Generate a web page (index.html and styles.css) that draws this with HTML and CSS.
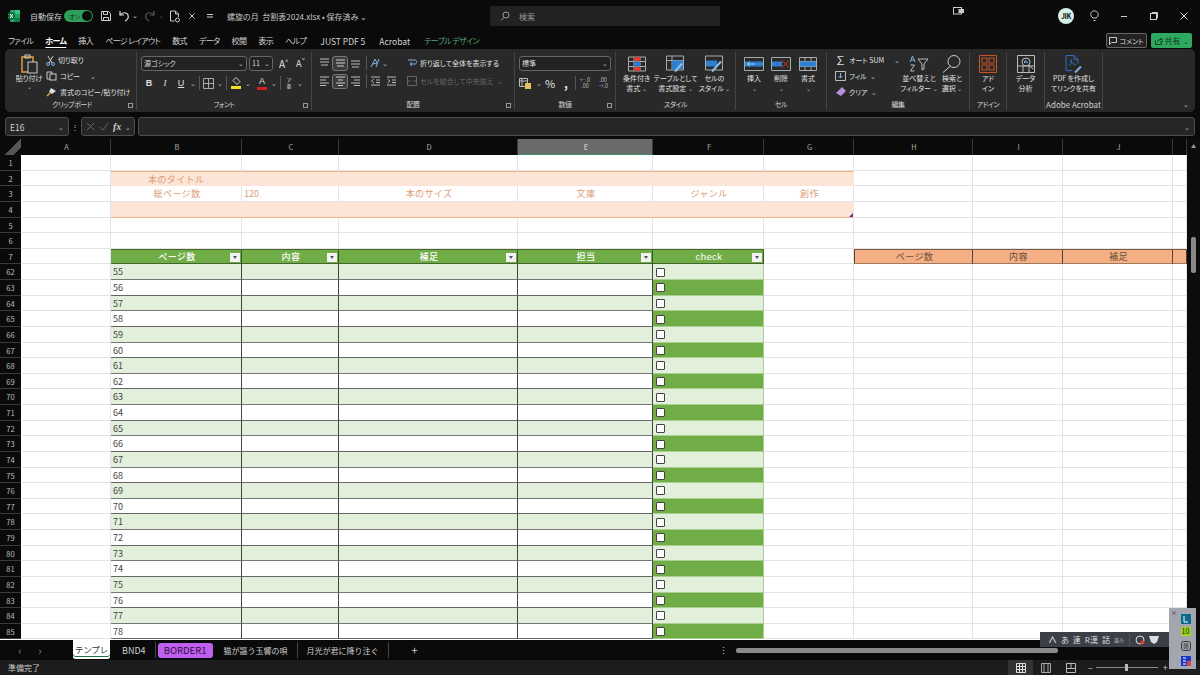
FILE: index.html
```html
<!DOCTYPE html>
<html lang="ja">

<head>
    <meta charset="UTF-8">
    <title>螺旋の月 台割表2024.xlsx</title>
    <link rel="stylesheet" href="styles.css">
</head>

<body>

    <!-- title bar -->
    <div class="titlebar">
        <div class="qat">
            <svg width="14" height="14" viewBox="0 0 14 14"><rect x="3" y="1" width="10" height="12" rx="1" fill="#21a366"/><rect x="8" y="1" width="5" height="4" fill="#33c481"/><rect x="8" y="9" width="5" height="4" fill="#107c41"/><rect x="1" y="3.5" width="7" height="7" rx="1" fill="#0e6b3a"/><path d="M3 5l3 4M6 5L3 9" stroke="#fff" stroke-width="1"/></svg>
            <span class="qat-label">自動保存</span>
            <span class="toggle"><span>オン</span><i></i></span>
            <svg class="gap7" width="12" height="12" viewBox="0 0 12 12" fill="none" stroke="#ccc"><path d="M1.5 1.5h7l2 2v7h-9z"/><path d="M3.5 1.5v3h4v-3M3.5 10.5v-3h5v3"/></svg>
            <svg class="gap5" width="14" height="12" viewBox="0 0 14 12" fill="none" stroke="#ddd" stroke-width="1.2"><path d="M3 1v4h4"/><path d="M3 5c2-3 7-3 8 0s-1 5-3 6"/></svg>
            <span class="chev">⌄</span>
            <svg class="gap5" width="14" height="12" viewBox="0 0 14 12" fill="none" stroke="#555" stroke-width="1.2"><path d="M11 1v4H7"/><path d="M11 5C9 2 4 2 3 5s1 5 3 6"/></svg>
            <span class="chev dim">⌄</span>
            <svg class="gap5" width="12" height="13" viewBox="0 0 12 13" fill="none" stroke="#ccc"><path d="M1.5 1h5l3 3v3M1.5 1v10h4M6.5 1v3h3"/><circle cx="8.5" cy="10" r="2"/></svg>
            <svg class="qat-x" width="6" height="6" viewBox="0 0 6 6" stroke="#ccc"><path d="M.5.5l5 5M5.5.5l-5 5"/></svg>
            <svg class="qat-more" width="6" height="5" viewBox="0 0 6 5" stroke="#ccc"><path d="M0 .5h6M0 3h6"/></svg>
        </div>
        <div class="doc-title">螺旋の月&nbsp; 台割表2024.xlsx • 保存済み ⌄</div>
        <div class="search">
            <svg width="10" height="10" viewBox="0 0 10 10" fill="none" stroke="#999"><circle cx="6" cy="4" r="3"/><path d="M4 6.5L1 9.5"/></svg>
            <span>検索</span>
        </div>
        <div class="win">
            <svg class="cam" width="11" height="8" viewBox="0 0 11 8" fill="none" stroke="#ccc"><rect x="0.5" y="0.5" width="8" height="6.5"/><rect x="6" y="2.5" width="4.5" height="3" fill="#ccc"/></svg>
            <span class="avatar">JIK</span>
            <svg class="bulb" width="9" height="12" viewBox="0 0 9 12" fill="none" stroke="#ccc"><path d="M3 8C1 6.5.5 5 .8 3.5 2 0 7 0 8.2 3.5 8.5 5 8 6.5 6 8z"/><path d="M3.5 10.5h2"/></svg>
            <svg class="win-btn" width="8" height="8" viewBox="0 0 8 8" stroke="#ccc"><path d="M1 4.5h6"/></svg>
            <svg class="win-btn" width="8" height="8" viewBox="0 0 8 8" fill="none" stroke="#ccc"><rect x=".5" y="1.5" width="6" height="6"/><path d="M2 1.5V.5h5.5V6h-1"/></svg>
            <svg class="win-btn" width="8" height="8" viewBox="0 0 8 8" stroke="#ddd"><path d="M.5.5l7 7M7.5.5l-7 7"/></svg>
        </div>
    </div>

    <!-- menu tabs -->
    <div class="menubar">
        <span>ファイル</span>
        <span class="on">ホーム</span>
        <span>挿入</span>
        <span>ページ レイアウト</span>
        <span>数式</span>
        <span>データ</span>
        <span>校閲</span>
        <span>表示</span>
        <span>ヘルプ</span>
        <span class="en">JUST PDF 5</span>
        <span class="en">Acrobat</span>
        <span class="green">テーブル デザイン</span>
        <div class="menu-right">
            <div class="btn-comment">
                <svg width="8" height="8" viewBox="0 0 8 8" fill="none" stroke="#ccc"><path d="M.5.5h7v5h-5L.5 7.5z"/></svg>
                コメント
            </div>
            <div class="btn-share">
                <svg width="8" height="8" viewBox="0 0 8 8" fill="none" stroke="#0b3d20"><path d="M.5 3.5v4h6v-2M2.5 5C3 3 4.5 2.5 6 2.5V1l2 2.5L6 5.5V4"/></svg>
                共有 <small>⌄</small>
            </div>
        </div>
    </div>

    <!-- ribbon -->
    <div class="ribbon">
        <div class="grp g-clip">
            <div class="grp-body clip">
                <div class="tool-lg paste">
                    <svg width="18" height="20" viewBox="0 0 18 20" fill="none"><path d="M2 3h11v15H2z" stroke="#e8a33d" stroke-width="1.4"/><rect x="5" y="1" width="5" height="3" stroke="#ccc"/><rect x="8" y="8" width="9" height="11" fill="#292929" stroke="#ccc"/></svg>
                    <span>貼り付け</span>
                    <small>⌄</small>
                </div>
                <div class="tool-col">
                    <div class="tool"><svg width="9" height="11" viewBox="0 0 9 11" fill="none" stroke="#ccc"><path d="M2 1l4 7M7 1L3 8"/><circle cx="2" cy="9" r="1.5" stroke="#7fb2e5"/><circle cx="7" cy="9" r="1.5" stroke="#7fb2e5"/></svg>切り取り</div>
                    <div class="tool"><svg width="11" height="10" viewBox="0 0 11 10" fill="none" stroke="#ccc"><path d="M1 1h5v7H1z"/><rect x="4" y="3" width="6" height="6" fill="#292929"/></svg>コピー <small class="sp">⌄</small></div>
                    <div class="tool"><svg width="11" height="10" viewBox="0 0 11 10" fill="none"><path d="M5 1l5 3-4 3-3-2z" fill="#ddd"/><path d="M4 6L1 9" stroke="#e8a33d" stroke-width="1.5"/></svg>書式のコピー/貼り付け</div>
                </div>
            </div>
            <div class="grp-label">クリップボード<i class="launch"></i></div>
        </div>

        <div class="grp g-font">
            <div class="grp-body stack">
                <div class="line">
                    <span class="select sel-font">源ゴシック<small>⌄</small></span>
                    <span class="select sel-size">11<small>⌄</small></span>
                    <span class="big-a">A<sup>^</sup></span>
                    <span class="big-a small-a">A<sup>ˇ</sup></span>
                </div>
                <div class="line icons">
                    <span class="ic b">B</span><span class="ic it">I</span><span class="ic u">U</span><small>⌄</small>
                    <i class="sep"></i>
                    <svg width="11" height="11" viewBox="0 0 11 11" fill="none" stroke="#aaa"><path d="M.5.5h10v10H.5zM5.5.5v10M.5 5.5h10"/></svg><small>⌄</small>
                    <i class="sep"></i>
                    <span class="swatch"><svg width="10" height="8" viewBox="0 0 10 8" fill="none" stroke="#ccc"><path d="M5 .5l4 4-3 3-4-4z"/></svg><b class="yellow"></b></span><small>⌄</small>
                    <span class="swatch second"><em>A</em><b class="red"></b></span><small>⌄</small>
                    <i class="sep"></i>
                    <span class="ruby">ア<br>亜</span><small>⌄</small>
                </div>
            </div>
            <div class="grp-label">フォント<i class="launch"></i></div>
        </div>

        <div class="grp g-align">
            <div class="grp-body stack">
                <div class="line al">
                    <svg class="al-ic" width="11" height="10" viewBox="0 0 11 10" stroke="#bbb"><path d="M1 1h9M1 4h9M2 7h7"/></svg>
                    <span class="boxed"><svg width="11" height="10" viewBox="0 0 11 10" stroke="#ccc"><path d="M1 2h9M1 5h9M2 8h7"/></svg></span>
                    <svg class="al-ic" width="11" height="10" viewBox="0 0 11 10" stroke="#bbb"><path d="M1 3h9M1 6h9M2 9h7"/></svg>
                    <i class="sep"></i>
                    <svg width="10" height="10" viewBox="0 0 10 10" fill="none" stroke="#7fb2e5"><path d="M1 9l4-8 2 4-4 1M9 1L6 9"/></svg><small class="orient-chev">⌄</small>
                    <span class="wrap"><svg width="10" height="10" viewBox="0 0 10 10" fill="none" stroke="#7fb2e5"><path d="M1 2h7c2 0 2 4 0 4H4M5 4L3 6l2 2"/></svg>折り返して全体を表示する</span>
                </div>
                <div class="line al">
                    <svg class="al-ic" width="11" height="10" viewBox="0 0 11 10" stroke="#bbb"><path d="M1 1h9M1 4h6M1 7h9M1 9.5h6"/></svg>
                    <span class="boxed"><svg width="11" height="10" viewBox="0 0 11 10" stroke="#ccc"><path d="M1 1h9M3 4h5M1 7h9M3 9.5h5"/></svg></span>
                    <svg class="al-ic" width="11" height="10" viewBox="0 0 11 10" stroke="#bbb"><path d="M1 1h9M4 4h6M1 7h9M4 9.5h6"/></svg>
                    <i class="sep"></i>
                    <svg class="indent" width="11" height="10" viewBox="0 0 11 10" fill="none" stroke="#bbb"><path d="M1 1h9M6 4h4M6 6.5h4M1 9h9"/><path d="M4 3L1.5 5 4 7" stroke="#7fb2e5"/></svg>
                    <svg class="indent" width="11" height="10" viewBox="0 0 11 10" fill="none" stroke="#bbb"><path d="M1 1h9M6 4h4M6 6.5h4M1 9h9"/><path d="M1.5 3L4 5 1.5 7" stroke="#7fb2e5"/></svg>
                    <span class="wrap off"><svg width="10" height="10" viewBox="0 0 10 10" fill="none" stroke="#666"><path d="M.5.5h9v9h-9zM.5 5h3M6.5 5h3"/></svg>セルを結合して中央揃え <small>⌄</small></span>
                </div>
            </div>
            <div class="grp-label">配置<i class="launch"></i></div>
        </div>

        <div class="grp g-num">
            <div class="grp-body stack">
                <div class="line"><span class="select sel-num">標準<small>⌄</small></span></div>
                <div class="line icons">
                    <svg class="acc" width="12" height="11" viewBox="0 0 12 11" fill="none" stroke="#bbb"><path d="M.5.5h8v8h-8zM.5 3h8M3 .5v8"/><rect x="6" y="5" width="6" height="6" fill="#e6c063" stroke="none"/></svg><small>⌄</small>
                    <span class="pct">%</span>
                    <span class="comma">,</span>
                    <i class="sep"></i>
                    <span class="dec"><b>←</b>.0<br>.00</span>
                    <span class="dec second">.00<br><b>→</b>.0</span>
                </div>
            </div>
            <div class="grp-label">数値<i class="launch"></i></div>
        </div>

        <div class="grp g-style">
            <div class="grp-body lg-row">
                <div class="tool-lg w39">
                    <svg width="18" height="15" viewBox="0 0 18 15" fill="none" stroke="#aaa"><path d="M.5.5h17v14H.5zM6 .5v14M12 .5v14M.5 5h17M.5 10h17"/><path d="M6 .5h6V5H6zM6 10h6v4.5H6z" fill="#e03c31" stroke="none"/><path d="M6 5h6v5H6z" fill="#2f7fd1" stroke="none"/></svg>
                    <span>条件付き<br>書式 <small>⌄</small></span>
                </div>
                <div class="tool-lg w39">
                    <svg width="19" height="17" viewBox="0 0 19 17" fill="none" stroke="#aaa"><path d="M.5.5h17v14H.5zM.5 5h17M6 .5v14"/><path d="M6 5h11v9H6z" fill="#2f7fd1" stroke="none"/><path d="M9 16L16 8" stroke="#8fc1ee" stroke-width="2"/></svg>
                    <span>テーブルとして<br>書式設定 <small>⌄</small></span>
                </div>
                <div class="tool-lg w39">
                    <svg width="19" height="17" viewBox="0 0 19 17" fill="none" stroke="#aaa"><path d="M.5.5h17v14H.5z"/><path d="M1 5h11v6H1z" fill="#2f7fd1" stroke="none"/><path d="M7 16L16 6" stroke="#8fc1ee" stroke-width="2"/></svg>
                    <span>セルの<br>スタイル <small>⌄</small></span>
                </div>
            </div>
            <div class="grp-label">スタイル</div>
        </div>

        <div class="grp g-cell">
            <div class="grp-body lg-row">
                <div class="tool-lg w27">
                    <svg width="20" height="15" viewBox="0 0 20 15" fill="none" stroke="#aaa"><path d="M.5 1h19v13H.5z"/><path d="M1 5h18v5H1z" fill="#2f7fd1" stroke="none"/><path d="M11 7.5H3M6 5L3 7.5 6 10" stroke="#9cd"/></svg>
                    <span>挿入<br><small>⌄</small></span>
                </div>
                <div class="tool-lg w27">
                    <svg width="20" height="15" viewBox="0 0 20 15" fill="none" stroke="#aaa"><path d="M.5 1h19v13H.5z"/><path d="M1 5h10v5H1z" fill="#2f7fd1" stroke="none"/><path d="M11 4l7 7M18 4l-7 7" stroke="#e03c31"/></svg>
                    <span>削除<br><small>⌄</small></span>
                </div>
                <div class="tool-lg w27">
                    <svg width="18" height="15" viewBox="0 0 18 15" fill="none" stroke="#aaa"><path d="M.5 1h17v13H.5zM.5 5h17M.5 10h17M6 1v13M12 1v13"/><path d="M1 5h16v5H1z" fill="#2f7fd1" stroke="none"/></svg>
                    <span>書式<br><small>⌄</small></span>
                </div>
            </div>
            <div class="grp-label">セル</div>
        </div>

        <div class="grp g-edit">
            <div class="grp-body edit">
                <div class="tool-col">
                    <div class="tool"><span class="sigma">∑</span>オート SUM <small class="sp">⌄</small></div>
                    <div class="tool"><svg width="11" height="10" viewBox="0 0 11 10" fill="none" stroke="#bbb"><path d="M.5.5h10v9H.5z"/><path d="M5.5 2v5M3.5 5l2 2 2-2" stroke="#7fb2e5"/></svg>フィル <small>⌄</small></div>
                    <div class="tool"><svg width="11" height="10" viewBox="0 0 11 10"><path d="M7 0l4 4-5 5-5-3z" fill="#b98de0"/></svg>クリア <small>⌄</small></div>
                </div>
                <div class="tool-lg w37">
                    <svg width="20" height="18" viewBox="0 0 20 18" fill="none" stroke="#bbb"><path d="M9 4l4 5v6l2-1V9l4-5z"/><path d="M1 7l2.5-6L6 7M2 5h3" stroke="#7fb2e5"/><path d="M1.5 10h4l-4 6h4"/></svg>
                    <span>並べ替えと<br>フィルター <small>⌄</small></span>
                </div>
                <div class="tool-lg w29">
                    <svg width="20" height="19" viewBox="0 0 20 19" fill="none" stroke="#ccc"><circle cx="12" cy="7" r="6"/><path d="M8 12L1 18"/></svg>
                    <span>検索と<br>選択 <small>⌄</small></span>
                </div>
            </div>
            <div class="grp-label">編集</div>
        </div>

        <div class="grp g-addin">
            <div class="grp-body lg-row">
                <div class="tool-lg w35">
                    <svg width="18" height="18" viewBox="0 0 18 18" fill="none" stroke="#c8502a"><path d="M.5.5h17v17H.5z"/><rect x="3" y="3" width="5" height="5"/><rect x="10" y="3" width="5" height="5"/><rect x="3" y="10" width="5" height="5"/><rect x="10" y="10" width="5" height="5"/></svg>
                    <span>アド<br>イン</span>
                </div>
            </div>
            <div class="grp-label">アドイン</div>
        </div>

        <div class="grp g-data">
            <div class="grp-body lg-row">
                <div class="tool-lg w35">
                    <svg width="18" height="18" viewBox="0 0 18 18" fill="none" stroke="#bbb"><path d="M.5.5h17v17H.5zM.5 11h17M6 11v6M12 11v6"/><circle cx="9" cy="7" r="4"/><path d="M7.5 8V6M9 8V5M10.5 8V7" stroke="#7fb2e5"/><path d="M12 10l4 4"/></svg>
                    <span>データ<br>分析</span>
                </div>
            </div>
        </div>

        <div class="grp g-pdf">
            <div class="grp-body lg-row">
                <div class="tool-lg w56">
                    <svg width="18" height="19" viewBox="0 0 18 19" fill="none" stroke="#2d6fc0"><path d="M1 1h8l4 4v4M1 1v15h6M9 1v4h4"/><path d="M4 11c2-1 3-4 2-6 0 3 2 5 5 5"/><path d="M10 18l6-6" stroke="#7fb2e5" stroke-width="2"/></svg>
                    <span>PDF を作成し<br>てリンクを共有</span>
                </div>
            </div>
            <div class="grp-label acrobat">Adobe Acrobat</div>
        </div>

        <div class="ribbon-end"><small>⌄</small></div>
    </div>

    <!-- formula bar -->
    <div class="fbar">
        <span class="namebox">E16<small>⌄</small></span>
        <span class="fdots">⋮</span>
        <span class="fbtns">
            <svg width="9" height="9" viewBox="0 0 9 9" stroke="#666"><path d="M1 1l7 7M8 1L1 8"/></svg>
            <svg width="10" height="9" viewBox="0 0 10 9" fill="none" stroke="#666"><path d="M1 5l3 3 5-7"/></svg>
            <em>fx</em><small>⌄</small>
        </span>
        <span class="finput"><small>⌄</small></span>
    </div>

    <!-- sheet -->
    <div class="sheet">
        <div class="grid">
            <div class="row colhead">
                <span class="corner"></span><span>A</span><span>B</span><span>C</span><span>D</span><span class="sel">E</span><span>F</span><span>G</span><span>H</span><span>I</span><span>J</span><span></span>
            </div>
            <div class="row"><span>1</span><span></span><span></span><span></span><span></span><span></span><span></span><span></span><span></span><span></span><span></span><span></span></div>
            <div class="row peach top"><span>2</span><span></span><span class="book-title">本のタイトル</span><span></span><span></span><span></span><span></span><span></span><span></span><span></span><span></span><span></span></div>
            <div class="row info"><span>3</span><span></span><span class="mid">総ページ数</span><span>120</span><span class="mid">本のサイズ</span><span class="mid">文庫</span><span class="mid">ジャンル</span><span class="mid">創作</span><span></span><span></span><span></span><span></span></div>
            <div class="row peach bottom"><span>4</span><span></span><span></span><span></span><span></span><span></span><span></span><span class="fill-mark"></span><span></span><span></span><span></span><span></span></div>
            <div class="row"><span>5</span><span></span><span></span><span></span><span></span><span></span><span></span><span></span><span></span><span></span><span></span><span></span></div>
            <div class="row"><span>6</span><span></span><span></span><span></span><span></span><span></span><span></span><span></span><span></span><span></span><span></span><span></span></div>
            <div class="row thead"><span>7</span><span></span><span>ページ数<i></i></span><span>内容<i></i></span><span>補足<i></i></span><span>担当<i></i></span><span class="chk">check<i></i></span><span></span><span>ページ数</span><span>内容</span><span>補足</span><span></span></div>
            <div class="row band"><span>62</span><span></span><span>55</span><span></span><span></span><span></span><span><em></em></span><span></span><span></span><span></span><span></span><span></span></div>
            <div class="row plain"><span>63</span><span></span><span>56</span><span></span><span></span><span></span><span><em></em></span><span></span><span></span><span></span><span></span><span></span></div>
            <div class="row band"><span>64</span><span></span><span>57</span><span></span><span></span><span></span><span><em></em></span><span></span><span></span><span></span><span></span><span></span></div>
            <div class="row plain"><span>65</span><span></span><span>58</span><span></span><span></span><span></span><span><em></em></span><span></span><span></span><span></span><span></span><span></span></div>
            <div class="row band"><span>66</span><span></span><span>59</span><span></span><span></span><span></span><span><em></em></span><span></span><span></span><span></span><span></span><span></span></div>
            <div class="row plain"><span>67</span><span></span><span>60</span><span></span><span></span><span></span><span><em></em></span><span></span><span></span><span></span><span></span><span></span></div>
            <div class="row band"><span>68</span><span></span><span>61</span><span></span><span></span><span></span><span><em></em></span><span></span><span></span><span></span><span></span><span></span></div>
            <div class="row plain"><span>69</span><span></span><span>62</span><span></span><span></span><span></span><span><em></em></span><span></span><span></span><span></span><span></span><span></span></div>
            <div class="row band"><span>70</span><span></span><span>63</span><span></span><span></span><span></span><span><em></em></span><span></span><span></span><span></span><span></span><span></span></div>
            <div class="row plain"><span>71</span><span></span><span>64</span><span></span><span></span><span></span><span><em></em></span><span></span><span></span><span></span><span></span><span></span></div>
            <div class="row band"><span>72</span><span></span><span>65</span><span></span><span></span><span></span><span><em></em></span><span></span><span></span><span></span><span></span><span></span></div>
            <div class="row plain"><span>73</span><span></span><span>66</span><span></span><span></span><span></span><span><em></em></span><span></span><span></span><span></span><span></span><span></span></div>
            <div class="row band"><span>74</span><span></span><span>67</span><span></span><span></span><span></span><span><em></em></span><span></span><span></span><span></span><span></span><span></span></div>
            <div class="row plain"><span>75</span><span></span><span>68</span><span></span><span></span><span></span><span><em></em></span><span></span><span></span><span></span><span></span><span></span></div>
            <div class="row band"><span>76</span><span></span><span>69</span><span></span><span></span><span></span><span><em></em></span><span></span><span></span><span></span><span></span><span></span></div>
            <div class="row plain"><span>77</span><span></span><span>70</span><span></span><span></span><span></span><span><em></em></span><span></span><span></span><span></span><span></span><span></span></div>
            <div class="row band"><span>78</span><span></span><span>71</span><span></span><span></span><span></span><span><em></em></span><span></span><span></span><span></span><span></span><span></span></div>
            <div class="row plain"><span>79</span><span></span><span>72</span><span></span><span></span><span></span><span><em></em></span><span></span><span></span><span></span><span></span><span></span></div>
            <div class="row band"><span>80</span><span></span><span>73</span><span></span><span></span><span></span><span><em></em></span><span></span><span></span><span></span><span></span><span></span></div>
            <div class="row plain"><span>81</span><span></span><span>74</span><span></span><span></span><span></span><span><em></em></span><span></span><span></span><span></span><span></span><span></span></div>
            <div class="row band"><span>82</span><span></span><span>75</span><span></span><span></span><span></span><span><em></em></span><span></span><span></span><span></span><span></span><span></span></div>
            <div class="row plain"><span>83</span><span></span><span>76</span><span></span><span></span><span></span><span><em></em></span><span></span><span></span><span></span><span></span><span></span></div>
            <div class="row band"><span>84</span><span></span><span>77</span><span></span><span></span><span></span><span><em></em></span><span></span><span></span><span></span><span></span><span></span></div>
            <div class="row plain"><span>85</span><span></span><span>78</span><span></span><span></span><span></span><span><em></em></span><span></span><span></span><span></span><span></span><span></span></div>
        </div>
        <div class="vscroll"><small>▲</small><i></i></div>
    </div>

    <!-- sheet tabs -->
    <div class="tabs">
        <span class="tab-nav">‹</span>
        <span class="tab-nav">›</span>
        <span class="tab active">テンプレ</span>
        <span class="tab first">BND4</span>
        <span class="tab purple">BORDER1</span>
        <span class="tab">猫が謳う玉響の唄</span>
        <span class="tab">月光が君に降り注ぐ</span>
        <span class="tab-add">+</span>
        <span class="tab-dots">⋮</span>
        <div class="hscroll"><i></i></div>
    </div>

    <!-- status bar -->
    <div class="status">
        <span>準備完了</span>
        <div class="views">
            <span class="view on"><svg width="10" height="10" viewBox="0 0 10 10" fill="none" stroke="#ddd"><path d="M.5.5h9v9h-9zM3.5.5v9M6.5.5v9M.5 3.5h9M.5 6.5h9"/></svg></span>
            <span class="view"><svg width="10" height="10" viewBox="0 0 10 10" fill="none" stroke="#aaa"><path d="M.5.5h9v9h-9zM3 .5v9M7 .5v9"/></svg></span>
            <span class="view"><svg width="10" height="10" viewBox="0 0 10 10" fill="none" stroke="#bbb"><path d="M.5.5h9v9h-9zM5 .5v5M.5 5.5h9"/></svg></span>
        </div>
        <div class="zoom">–<span class="zoom-track"><i></i></span>+</div>
    </div>

    <!-- floating IME bar, lies over the sheet -->
    <div class="ime">
        <span class="ime-a">∧</span><span>あ</span><span>連</span><span>R漢</span><span>話</span><small>英小</small>
        <i class="sep"></i>
        <svg width="10" height="10" viewBox="0 0 10 10" fill="none" stroke="#ddd"><circle cx="5" cy="5" r="4"/><circle cx="7.5" cy="7.5" r="2" fill="#e03c31" stroke="none"/></svg>
        <svg width="10" height="8" viewBox="0 0 10 8" fill="#ddd"><path d="M0 0h10L8 6 5 8 2 6z"/></svg>
    </div>
    <div class="ime-side">
        <b class="side-x">×</b>
        <svg width="10" height="10" viewBox="0 0 10 10"><rect width="10" height="10" fill="#0b6b8a"/><path d="M3 2v6h4" stroke="#fff" fill="none"/></svg>
        <span class="side-num">10</span>
        <span class="side-menu"><svg width="10" height="10" viewBox="0 0 10 10" fill="none" stroke="#333"><rect x=".5" y=".5" width="9" height="9" rx="2"/><path d="M2.5 3h5M2.5 5h5M2.5 7h5"/></svg></span>
        <svg width="10" height="10" viewBox="0 0 10 10"><rect width="10" height="10" fill="#1a35c8"/><path d="M2 2h3M2 5h3M2 8h3" stroke="#fff"/><rect x="6" y="5" width="4" height="5" fill="#d44"/></svg>
    </div>

</body>

</html>
```

FILE: styles.css
```css
* {
    box-sizing: border-box;
}

body {
    margin: 0;
    width: 1200px;
    height: 675px;
    overflow: hidden;
    position: relative;
    display: flex;
    flex-direction: column;
    background-color: #0a0a0a;
    color: #d0d0d0;
    font-family: "Noto Sans CJK JP", "Noto Sans", sans-serif;
    font-size: 8px;
    font-feature-settings: "palt";
}

small {
    font-size: 7px;
    color: #bbb;
}

svg {
    flex-shrink: 0;
    display: block;
}

/* title bar */
.titlebar {
    height: 32px;
    display: flex;
    align-items: center;
    position: relative;
}

.qat {
    display: flex;
    align-items: center;
    width: 227px;
    flex-shrink: 0;
    padding-left: 7px;
}

.qat-label {
    margin-left: 9px;
    width: 34px;
    white-space: nowrap;
    font-size: 8px;
}

.toggle {
    width: 29px;
    height: 12px;
    border-radius: 6px;
    background-color: #2f9e5b;
    display: flex;
    align-items: center;
    justify-content: space-between;
    padding: 0 1px 0 5px;
    font-size: 6px;
    color: #0c2c18;
    white-space: nowrap;
}

.toggle i {
    width: 10px;
    height: 10px;
    border-radius: 50%;
    background-color: #0a0a0a;
}

.gap5 {
    margin-left: 5px;
}

.gap7 {
    margin-left: 7px;
}

.chev {
    width: 6px;
    margin-left: 1px;
    margin-bottom: 2px;
    font-size: 7px;
}

.dim {
    color: #555;
}

.qat-x {
    margin-left: 8px;
}

.qat-more {
    margin-left: 12px;
}

.doc-title {
    width: 263px;
    flex-shrink: 0;
    font-size: 8px;
    color: #c8c8c8;
}

.search {
    width: 230px;
    height: 20px;
    flex-shrink: 0;
    background-color: #222;
    display: flex;
    align-items: center;
    gap: 9px;
    padding-left: 10px;
    color: #999;
    font-size: 8px;
}

.win {
    flex: 1;
    display: flex;
    align-items: center;
}

.cam {
    margin: -11px 0 0 233px;
}

.avatar {
    width: 16px;
    height: 16px;
    border-radius: 50%;
    background-color: #d5efe9;
    color: #111;
    font-size: 7px;
    font-weight: 700;
    letter-spacing: -0.3px;
    display: flex;
    align-items: center;
    justify-content: center;
    margin-left: 94px;
}

.bulb {
    margin-left: 16px;
}

.bulb + .win-btn {
    margin-left: 21px;
}

.win-btn {
    margin-left: 22px;
}

/* menu tabs */
.menubar {
    height: 17px;
    display: flex;
    align-items: center;
    gap: 12px;
    padding-left: 8px;
    font-size: 8px;
    letter-spacing: -0.6px;
    color: #d4d4d4;
    white-space: nowrap;
}

.menubar .on {
    font-weight: 700;
    color: #fff;
    text-decoration: underline;
    text-underline-offset: 3px;
}

.menubar .en {
    font-size: 8.5px;
    letter-spacing: 0;
    margin-left: 2px;
}

.menubar .green {
    color: #55a87a;
    margin-left: 2px;
}

.menu-right {
    margin-left: auto;
    margin-right: 8px;
    display: flex;
    gap: 4px;
    letter-spacing: 0;
}

.btn-comment,
.btn-share {
    height: 15px;
    width: 41px;
    border-radius: 2px;
    display: flex;
    align-items: center;
    justify-content: center;
    gap: 2px;
    font-size: 7px;
}

.btn-comment {
    border: 1px solid #666;
    background-color: #222;
}

.btn-share {
    background-color: #2fa860;
    color: #0b3d20;
    font-size: 8px;
}

.btn-share small {
    color: #0b3d20;
}

/* ribbon */
.ribbon {
    height: 63px;
    margin: 0 5px;
    padding: 3px 0 0 3px;
    background-color: #292929;
    border-radius: 5px;
    display: flex;
    color: #e0e0e0;
}

.grp {
    height: 58px;
    border-right: 1px solid #444;
    display: flex;
    flex-direction: column;
    flex-shrink: 0;
    position: relative;
}

.g-clip { width: 129px; }
.g-font { width: 175px; }
.g-align { width: 203px; }
.g-num { width: 101px; }
.g-style { width: 120px; }
.g-cell { width: 91px; }
.g-edit { width: 143px; }
.g-addin { width: 37px; }
.g-data { width: 38px; }
.g-pdf { width: 58px; }

.w27 { width: 27px; }
.w29 { width: 29px; }
.w35 { width: 35px; }
.w37 { width: 37px; }
.w39 { width: 39px; }
.w56 { width: 56px; }

.grp-body {
    height: 47px;
    display: flex;
    flex-shrink: 0;
}

.grp-label {
    height: 11px;
    text-align: center;
    font-size: 7px;
    letter-spacing: -0.5px;
    line-height: 11px;
    color: #d0d0d0;
}

.grp-label.acrobat {
    font-size: 8px;
    letter-spacing: 0;
    white-space: nowrap;
}

.launch {
    position: absolute;
    right: 3px;
    bottom: 2px;
    width: 5px;
    height: 5px;
    border: 1px solid #999;
}

.ribbon-end {
    flex: 1;
    display: flex;
    justify-content: flex-end;
    align-items: flex-end;
    padding: 0 6px 3px 0;
}

.tool-lg {
    display: flex;
    flex-direction: column;
    align-items: center;
    flex-shrink: 0;
    text-align: center;
    font-size: 7px;
    line-height: 9.5px;
    white-space: nowrap;
    color: #e0e0e0;
}

.tool-lg svg {
    height: 20px;
}

.tool-lg small {
    font-size: 6px;
    line-height: 6px;
}

.paste {
    width: 32px;
    margin-left: 5px;
    padding-top: 2px;
}

.clip {
    gap: 1px;
}

.tool-col {
    display: flex;
    flex-direction: column;
    justify-content: space-between;
    padding: 2px 0 1px;
}

.tool {
    display: flex;
    align-items: center;
    gap: 3px;
    white-space: nowrap;
    font-size: 7px;
    line-height: 12px;
}

.tool small.sp {
    margin-left: 7px;
}

.stack {
    flex-direction: column;
    gap: 2px;
    padding: 3px 0 0 4px;
}

.line {
    display: flex;
    align-items: center;
    height: 16px;
    gap: 2px;
}

.select {
    height: 15px;
    border: 1px solid #666;
    border-radius: 3px;
    display: flex;
    align-items: center;
    justify-content: space-between;
    padding: 0 2px;
    font-size: 7px;
    color: #ddd;
    background-color: #222;
}

.sel-font { width: 106px; }
.sel-size { width: 24px; }
.sel-num { width: 92px; }

.big-a {
    font-size: 10px;
    margin-left: 4px;
    width: 13px;
}

.big-a sup {
    font-size: 6px;
    line-height: 0;
}

.small-a {
    font-size: 9px;
    margin-left: 2px;
}

.icons {
    margin-top: 2px;
    gap: 0;
}

.icons small {
    width: 7px;
    text-align: center;
    margin-left: 2px;
}

.ic {
    width: 16px;
    text-align: center;
    font-size: 9px;
    font-family: "Liberation Sans", sans-serif;
}

.ic + small {
    margin-left: 0;
}

.ic.b {
    font-weight: 700;
}

.ic.it {
    font-style: italic;
    font-family: "Liberation Serif", serif;
}

.ic.u {
    text-decoration: underline;
}

.sep {
    width: 1px;
    height: 14px;
    background-color: #555;
    margin: 0 3px;
    flex-shrink: 0;
}

.swatch {
    width: 12px;
    display: flex;
    flex-direction: column;
    align-items: center;
    font-size: 9px;
    line-height: 9px;
}

.swatch.second {
    margin-left: 5px;
}

.swatch em {
    font-style: normal;
    font-family: "Liberation Sans", sans-serif;
}

.swatch b {
    width: 10px;
    height: 3px;
    display: block;
    margin-top: 1px;
}

.yellow {
    background-color: #f2e01a;
}

.red {
    background-color: #d81e1e;
}

.ruby {
    width: 10px;
    font-size: 5px;
    line-height: 6px;
    text-align: center;
}

.al {
    gap: 0;
    padding-left: 1px;
}

.al-ic {
    margin: 0 2px;
}

.boxed {
    width: 16px;
    height: 15px;
    border: 1px solid #777;
    border-radius: 3px;
    background-color: #3c3c3c;
    display: flex;
    align-items: center;
    justify-content: center;
}

.orient-chev {
    margin-left: 2px;
}

.indent {
    margin-right: 5px;
}

.wrap {
    display: flex;
    align-items: center;
    white-space: nowrap;
    font-size: 7px;
    margin-left: 19px;
}

.wrap svg {
    margin-right: 3px;
}

.wrap.off {
    color: #666;
    margin-left: 5px;
}

.wrap.off small {
    color: #666;
    margin-left: 4px;
}

.acc {
    margin-right: 2px;
}

.pct {
    font-size: 11px;
    width: 16px;
    text-align: center;
}

.comma {
    width: 16px;
    font-size: 12px;
    font-weight: 700;
    text-align: center;
    line-height: 10px;
}

.comma + .sep {
    margin: 0 1px;
}

.dec {
    font-size: 5.5px;
    line-height: 6px;
    width: 16px;
    color: #bbb;
    text-align: center;
}

.dec b {
    color: #7fb2e5;
    font-weight: 400;
}

.dec.second {
    margin-left: 2px;
}

.lg-row {
    justify-content: center;
    padding-top: 2px;
}

.edit {
    padding: 0 0 0 8px;
}

.edit .tool-col {
    width: 65.5px;
}

.edit .tool-lg {
    padding-top: 2px;
}

.sigma {
    width: 11px;
    font-size: 11px;
    line-height: 11px;
    text-align: center;
}

/* formula bar */
.fbar {
    height: 19px;
    margin: 5px 5px 3px;
    display: flex;
    align-items: center;
    flex-shrink: 0;
}

.namebox,
.fbtns,
.finput {
    height: 19px;
    background-color: #262626;
    border: 1px solid #4e4e4e;
    border-radius: 3px;
    display: flex;
    align-items: center;
}

.namebox {
    width: 64px;
    justify-content: space-between;
    padding: 0 4px;
    font-size: 8.5px;
}

.fdots {
    width: 12px;
    text-align: center;
    font-size: 8px;
}

.fbtns {
    width: 54px;
    gap: 4px;
    padding-left: 4px;
}

.fbtns em {
    font-family: "Liberation Serif", serif;
    font-weight: 700;
    font-size: 10px;
    color: #ccc;
}

.finput {
    flex: 1;
    margin-left: 3px;
    justify-content: flex-end;
    padding-right: 4px;
}

/* sheet */
.sheet {
    height: 501px;
    display: flex;
    flex-shrink: 0;
}

.grid {
    width: 1187px;
    background-color: #fff;
}

.row {
    display: grid;
    grid-template-columns: 21px 90px 131px 97px 179px 135px 111px 90px 119px 90px 110px 14px;
    height: 15.64px;
    font-size: 9px;
    line-height: 16px;
    color: #444;
    font-feature-settings: normal;
}

.row > span {
    border-right: 1px solid #e4e4e4;
    border-bottom: 1px solid #e4e4e4;
    padding-left: 2px;
    white-space: nowrap;
    overflow: hidden;
    position: relative;
}

/* first cell of every row is the row number */
.row > span:first-child {
    background-color: #0a0a0a;
    color: #bdbdbd;
    border: none;
    border-bottom: 1px solid #3a3a3a;
    padding: 0;
    text-align: center;
    font-size: 7.5px;
}

.colhead {
    height: 16px;
    background-color: #0a0a0a;
}

.colhead > span {
    background-color: #0a0a0a;
    color: #aaa;
    border-right: 1px solid #3a3a3a;
    border-bottom: none;
    text-align: center;
    font-size: 7.5px;
}

.colhead > span.sel {
    background-color: #6a6a6a;
    color: #ddd;
    border-bottom: 1px solid #3f8f63;
}

.colhead > span.corner {
    border: none;
    background: linear-gradient(135deg, #0a0a0a 55%, #555 55%, #555 80%, #0a0a0a 80%);
}

/* title block: columns B to G */
.peach > span:nth-child(n+3):nth-child(-n+8) {
    background-color: #fce4d6;
    border-right-color: #fce4d6;
    border-bottom-color: #fce4d6;
    color: #dc9d75;
}

.top > span:nth-child(n+3):nth-child(-n+8) {
    border-top: 1px solid #f4b084;
    line-height: 15px;
}

.bottom > span:nth-child(n+3):nth-child(-n+8) {
    border-bottom: 1px solid #f4b084;
}

.book-title {
    padding-left: 37px !important;
    letter-spacing: 0.4px;
}

.info > span {
    color: #dc9d75;
}

.mid {
    text-align: center;
    letter-spacing: 0.4px;
}

/* small resize handle in the corner of the title block */
.fill-mark::after {
    content: "";
    position: absolute;
    right: 0;
    bottom: 0;
    border: 2px solid transparent;
    border-right-color: #5b3a8a;
    border-bottom-color: #5b3a8a;
}

/* table head */
.thead > span:nth-child(n+3):nth-child(-n+7) {
    background-color: #70ad47;
    color: #fff;
    font-weight: 500;
    text-align: center;
    border-top: 1px solid #44662c;
    border-bottom: 1px solid #44662c;
    border-right: 1px solid #3a4f2a;
    line-height: 13px;
    letter-spacing: 0.4px;
}

.thead > span.chk {
    font-family: "Liberation Sans", sans-serif;
    font-weight: 700;
    font-size: 9.5px;
    border-right-color: #70ad47;
}

.thead > span i {
    position: absolute;
    right: 1px;
    bottom: 1px;
    width: 10px;
    height: 9px;
    background-color: #f2f2f2;
}

.thead > span i::after {
    content: "";
    position: absolute;
    left: 3px;
    top: 3px;
    border: 2px solid transparent;
    border-top: 3px solid #555;
}

.thead > span:nth-child(n+9):nth-child(-n+12) {
    background-color: #f4b084;
    color: #6a4a36;
    text-align: center;
    border-top: 1px solid #7a5a44;
    border-bottom: 1px solid #a07a5c;
    border-right: 1px solid #5a4030;
    line-height: 13px;
    letter-spacing: 0.4px;
}

.thead > span:nth-child(9) {
    border-left: 1px solid #5a4030;
}

.thead > span:nth-child(12) {
    border-right: none;
}

/* table body: columns B to E, F holds the checkboxes */
.band > span:nth-child(n+3):nth-child(-n+6),
.plain > span:nth-child(n+3):nth-child(-n+6) {
    border-right: 1px solid #444;
    border-bottom: 1px solid #666;
}

.band > span:nth-child(n+3):nth-child(-n+6) {
    background-color: #e2efda;
    border-bottom-color: #777;
}

.band > span:nth-child(7) {
    background-color: #e2efda;
}

.plain > span:nth-child(7) {
    background-color: #70ad47;
}

.band > span:nth-child(7),
.plain > span:nth-child(7) {
    border-right: 1px solid #a9d08e;
    border-bottom-color: #a9d08e;
    padding: 1px 0 0 3px;
    display: flex;
    align-items: center;
}

.row em {
    display: block;
    width: 9px;
    height: 9px;
    background-color: #fff;
    border: 1px solid #444;
    border-radius: 1px;
}

.vscroll {
    flex: 1;
    background-color: #0c0c0c;
    position: relative;
    text-align: center;
    line-height: 12px;
}

.vscroll small {
    font-size: 5px;
    color: #999;
}

.vscroll i {
    position: absolute;
    left: 4px;
    top: 98px;
    width: 5px;
    height: 36px;
    background-color: #8a8a8a;
    border-radius: 2px;
}

/* sheet tabs */
.tabs {
    height: 20px;
    display: flex;
    align-items: center;
    flex-shrink: 0;
    font-size: 8px;
    color: #ccc;
    padding-left: 10px;
    font-feature-settings: normal;
}

.tab-nav {
    width: 20px;
    text-align: center;
    font-size: 11px;
    color: #888;
}

.tab {
    height: 16px;
    padding: 0 9px;
    display: flex;
    align-items: center;
    border-right: 1px solid #444;
    white-space: nowrap;
}

.tab.active {
    height: 19px;
    width: 37px;
    margin: -1px 2px 0 23px;
    padding: 0 2px 2px;
    background-color: #fff;
    color: #333;
    border: none;
    border-radius: 0 0 3px 3px;
    box-shadow: inset 0 -2px 0 #fff, inset 0 -3px 0 #217346;
    font-size: 8.5px;
    letter-spacing: -0.2px;
}

.tab.first {
    margin-left: 1px;
    font-size: 9px;
}

.tab.purple {
    height: 15px;
    width: 55px;
    margin: 0 2px 0 2px;
    padding: 0;
    justify-content: center;
    background-color: #bf5ff0;
    color: #311040;
    border: none;
    border-radius: 3px;
    font-size: 9.5px;
}

.tab-add {
    margin-left: 20px;
    font-size: 11px;
    width: 12px;
    text-align: center;
}

.tab-dots {
    margin-left: 298px;
    width: 8px;
    text-align: center;
    font-size: 9px;
}

.hscroll {
    margin-left: 9px;
    width: 440px;
}

.hscroll i {
    display: block;
    width: 322px;
    height: 5px;
    background-color: #8a8a8a;
    border-radius: 2px;
}

/* status bar */
.status {
    height: 15px;
    flex-shrink: 0;
    background-color: #1c1c1c;
    display: flex;
    align-items: center;
    padding-left: 8px;
    font-size: 8px;
    color: #c8c8c8;
}

.views {
    margin-left: auto;
    display: flex;
    height: 15px;
}

.view {
    width: 25px;
    display: flex;
    align-items: center;
    justify-content: center;
}

.view.on {
    background-color: #333;
}

.zoom {
    width: 117px;
    padding-left: 5px;
    display: flex;
    align-items: center;
    gap: 3px;
    font-size: 9px;
}

.zoom-track {
    width: 62px;
    height: 1px;
    background-color: #888;
    position: relative;
    margin-right: 2px;
}

.zoom-track i {
    position: absolute;
    left: 29px;
    top: -3px;
    width: 3px;
    height: 7px;
    background-color: #bbb;
}

/* IME toolbar floats over the sheet */
.ime {
    position: absolute;
    left: 1040px;
    top: 632px;
    width: 130px;
    height: 15px;
    background-color: #3b3f47;
    display: flex;
    align-items: center;
    gap: 4px;
    padding-left: 8px;
    font-size: 8px;
    color: #ddd;
}

.ime small {
    font-size: 5px;
    color: #ccc;
}

.ime .sep {
    height: 12px;
    margin: 0 1px;
}

.ime-a {
    font-weight: 700;
    font-size: 9px;
}

.ime-side {
    position: absolute;
    left: 1169px;
    top: 608px;
    width: 27px;
    height: 61px;
    background-color: #a3a6ae;
    display: flex;
    flex-direction: column;
    align-items: center;
    gap: 3px;
    padding: 6px 0 0 6px;
}

.side-x {
    position: absolute;
    left: 2px;
    top: 2px;
    font-size: 6px;
    font-weight: 400;
    color: #222;
    line-height: 6px;
}

.side-num {
    font-size: 7px;
    line-height: 9px;
    background-color: #9bd316;
    color: #223;
    width: 10px;
    text-align: center;
}

.side-menu {
    width: 14px;
    height: 14px;
    display: flex;
    align-items: center;
    justify-content: center;
}
```
